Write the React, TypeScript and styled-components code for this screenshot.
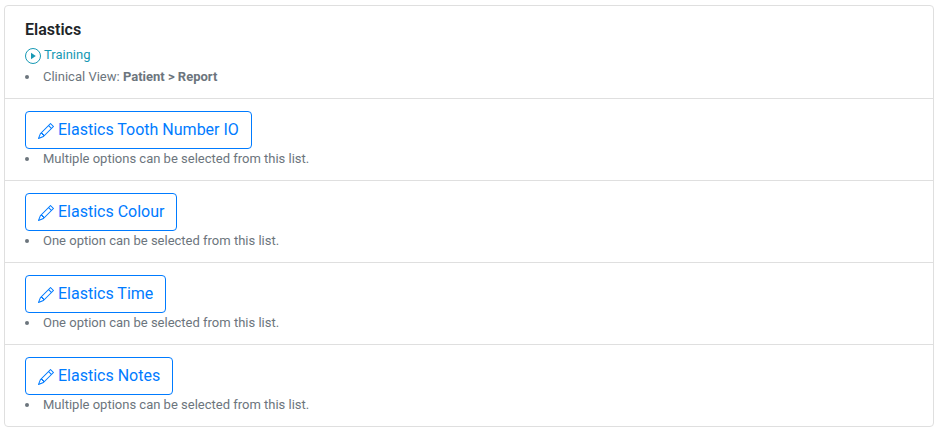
import React from "react";
import styled, { createGlobalStyle } from "styled-components";

const GlobalStyle = createGlobalStyle`
  *, *::before, *::after { box-sizing: border-box; }
  body {
    margin: 0;
    background: #fff;
    color: #212529;
    font-family: Roboto, "Liberation Sans", sans-serif;
    font-size: 16px;
    line-height: 24px;
  }
`;

const Page = styled.main`
  padding: 5px 8px 6px 4px;
`;

const Card = styled.section`
  border: 1px solid #dfdfdf;
  border-radius: 4px;
  background: #fff;
`;

const Row = styled.div`
  padding: 12px 20px;
  & + & { border-top: 1px solid #dfdfdf; }
`;

const Title = styled.h1`
  margin: 0;
  font-size: 16px;
  line-height: 24px;
  font-weight: 600;
`;

const TrainingLink = styled.a`
  display: block;
  width: fit-content;
  color: #1799b4;
  font-size: 13px;
  line-height: 25px;
  text-decoration: none;
`;

const Notes = styled.ul`
  margin: 0;
  padding: 0;
  list-style-position: inside;
  color: #6c757d;
  font-size: 13px;
  line-height: 19px;
`;

const EditButton = styled.button`
  display: block;
  padding: 6px 12px;
  border: 1px solid #007bff;
  border-radius: 4px;
  background: #fff;
  color: #007bff;
  font: inherit;
  cursor: pointer;
`;

const Icon = styled.svg`
  width: 16px;
  height: 16px;
  vertical-align: middle;
`;

const PlayIcon = () => (
  <Icon viewBox="0 0 16 16" fill="currentColor" aria-hidden="true">
    <circle cx="8" cy="8" r="7.5" fill="none" stroke="currentColor" />
    <path d="M6 4.8v6.4L10.8 8z" />
  </Icon>
);

const PencilIcon = () => (
  <Icon viewBox="0 0 16 16" fill="currentColor" aria-hidden="true">
    <path d="M12.146.146a.5.5 0 0 1 .708 0l3 3a.5.5 0 0 1 0 .708l-10 10a.5.5 0 0 1-.168.11l-5 2a.5.5 0 0 1-.65-.65l2-5a.5.5 0 0 1 .11-.168l10-10zM11.207 2.5 13.5 4.793 14.793 3.5 12.5 1.207 11.207 2.5zm1.586 3L10.5 3.207 4 9.707V10h.5a.5.5 0 0 1 .5.5v.5h.5a.5.5 0 0 1 .5.5v.5h.293l6.5-6.5zm-9.761 5.175-.106.106-1.528 3.821 3.821-1.528.106-.106A.5.5 0 0 1 5 12.5V12h-.5a.5.5 0 0 1-.5-.5V11h-.5a.5.5 0 0 1-.468-.325z" />
  </Icon>
);

const lists = [
  { name: "Elastics Tooth Number IO", note: "Multiple options can be selected from this list." },
  { name: "Elastics Colour", note: "One option can be selected from this list." },
  { name: "Elastics Time", note: "One option can be selected from this list." },
  { name: "Elastics Notes", note: "Multiple options can be selected from this list." },
];

export default function App() {
  return (
    <Page>
      <GlobalStyle />
      <Card>
        <Row>
          <Title>Elastics</Title>
          <TrainingLink href="#training">
            <PlayIcon /> Training
          </TrainingLink>
          <Notes>
            <li>Clinical View: <strong>Patient &gt; Report</strong></li>
          </Notes>
        </Row>
        {lists.map((list) => (
          <Row key={list.name}>
            <EditButton type="button">
              <PencilIcon /> {list.name}
            </EditButton>
            <Notes>
              <li>{list.note}</li>
            </Notes>
          </Row>
        ))}
      </Card>
    </Page>
  );
}
